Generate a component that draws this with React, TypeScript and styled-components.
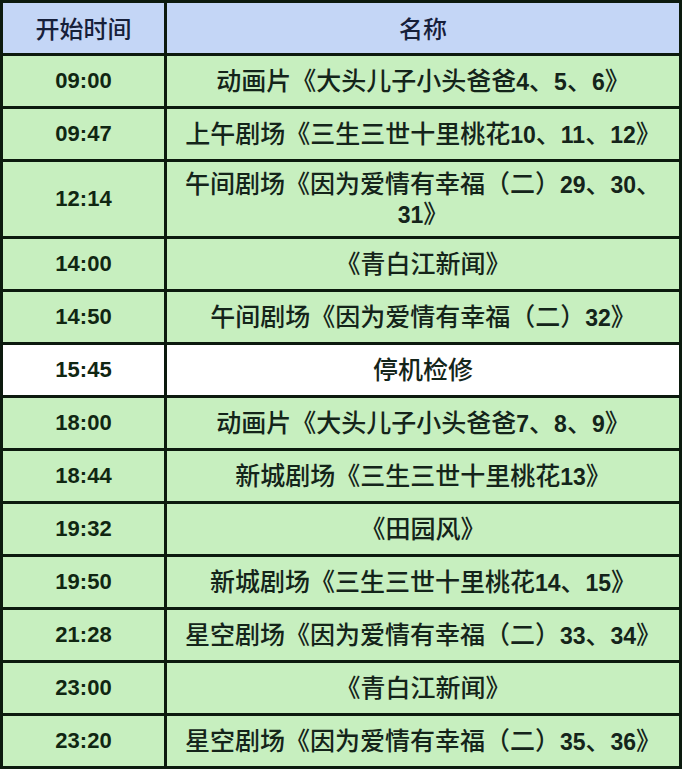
import React from 'react';
import styled, { createGlobalStyle } from 'styled-components';

const GlobalStyle = createGlobalStyle`
  html, body {
    margin: 0;
    padding: 0;
    background: #ffffff;
  }
`;

const Table = styled.div`
  width: 682px;
  box-sizing: border-box;
  display: grid;
  grid-template-columns: 161px 1fr;
  gap: 3px;
  padding: 3px;
  background: #0c1a0e;
`;

const Cell = styled.div<{ $tone: 'head' | 'green' | 'white' }>`
  min-height: 50px;
  box-sizing: border-box;
  padding: 7px 6px;
  display: flex;
  align-items: center;
  justify-content: center;
  text-align: center;
  background: ${(p) =>
    p.$tone === 'head' ? '#c4d6f6' : p.$tone === 'green' ? '#c7efbf' : '#ffffff'};
`;

const HeadText = styled.span`
  font-family: "Noto Sans CJK SC", sans-serif;
  font-size: 24px;
  font-weight: 500;
  color: #17203a;
  line-height: 30px;
`;

const Time = styled.span`
  font-family: "Liberation Sans", "Noto Sans CJK SC", sans-serif;
  font-size: 22px;
  font-weight: 700;
  color: #102612;
  line-height: 30px;
`;

const Name = styled.span`
  font-family: "Liberation Sans", "Noto Sans CJK SC", sans-serif;
  font-size: 25px;
  font-weight: 500;
  color: #14241a;
  line-height: 30px;
`;

const Num = styled.b`
  font-weight: 700;
  font-size: 23px;
  line-height: 1;
`;

type Row = { time: string; name: string[]; white?: boolean };

const rows: Row[] = [
  { time: '09:00', name: ['动画片《大头儿子小头爸爸4、5、6》'] },
  { time: '09:47', name: ['上午剧场《三生三世十里桃花10、11、12》'] },
  { time: '12:14', name: ['午间剧场《因为爱情有幸福（二）29、30、', '31》'] },
  { time: '14:00', name: ['《青白江新闻》'] },
  { time: '14:50', name: ['午间剧场《因为爱情有幸福（二）32》'] },
  { time: '15:45', name: ['停机检修'], white: true },
  { time: '18:00', name: ['动画片《大头儿子小头爸爸7、8、9》'] },
  { time: '18:44', name: ['新城剧场《三生三世十里桃花13》'] },
  { time: '19:32', name: ['《田园风》'] },
  { time: '19:50', name: ['新城剧场《三生三世十里桃花14、15》'] },
  { time: '21:28', name: ['星空剧场《因为爱情有幸福（二）33、34》'] },
  { time: '23:00', name: ['《青白江新闻》'] },
  { time: '23:20', name: ['星空剧场《因为爱情有幸福（二）35、36》'] },
];

// digits are bold in the original sheet, the chinese is not
function Mixed({ text }: { text: string }) {
  const parts = text.split(/(\d+)/);
  return (
    <>
      {parts.map((p, i) => (/^\d+$/.test(p) ? <Num key={i}>{p}</Num> : <React.Fragment key={i}>{p}</React.Fragment>))}
    </>
  );
}

export default function App() {
  return (
    <>
      <GlobalStyle />
      <Table>
        <Cell $tone="head"><HeadText>开始时间</HeadText></Cell>
        <Cell $tone="head"><HeadText>名称</HeadText></Cell>
        {rows.map((r) => {
          const tone = r.white ? 'white' : 'green';
          return (
            <React.Fragment key={r.time}>
              <Cell $tone={tone}><Time>{r.time}</Time></Cell>
              <Cell $tone={tone}>
                <Name>
                  {r.name.map((line, i) => (
                    <React.Fragment key={i}>
                      {i > 0 && <br />}
                      <Mixed text={line} />
                    </React.Fragment>
                  ))}
                </Name>
              </Cell>
            </React.Fragment>
          );
        })}
      </Table>
    </>
  );
}
